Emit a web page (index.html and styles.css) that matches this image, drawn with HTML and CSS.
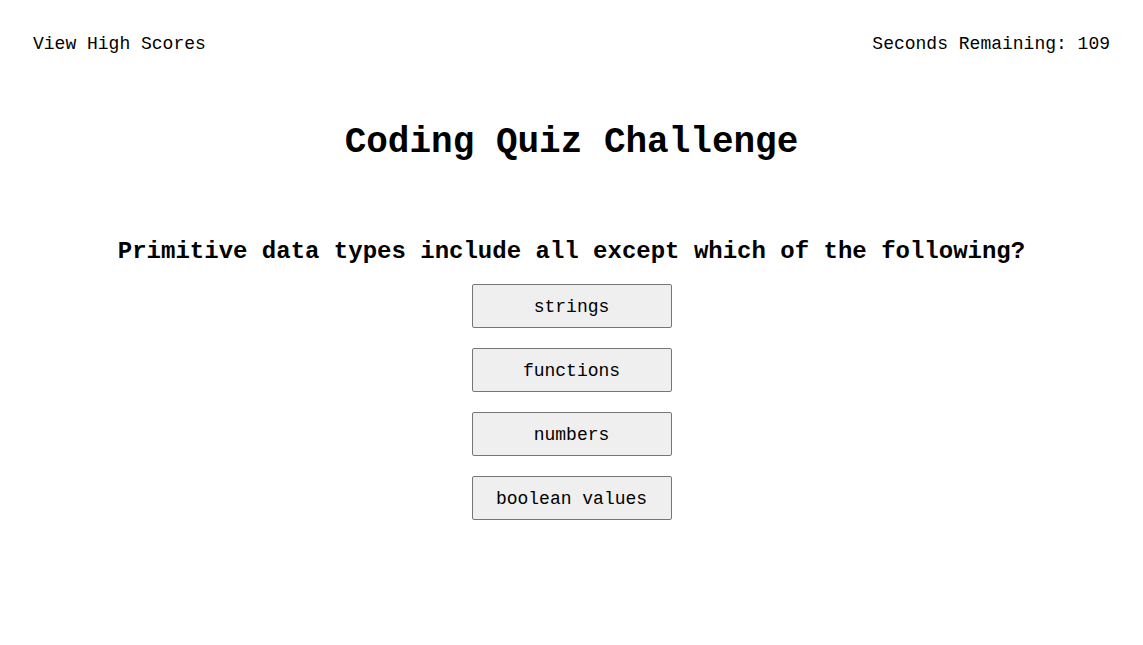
FILE: index.html
```html
<!DOCTYPE html>
<html>
<head>
<meta charset="utf-8">
<title>Coding Quiz Challenge</title>
<link rel="stylesheet" href="styles.css">
</head>
<body>
<header class="top-bar">
  <a class="high-scores">View High Scores</a>
  <span class="timer">Seconds Remaining: 109</span>
</header>
<main class="quiz">
  <h1 class="title">Coding Quiz Challenge</h1>
  <h2 class="question">Primitive data types include all except which of the following?</h2>
  <div class="answers">
    <button class="answer">strings</button>
    <button class="answer">functions</button>
    <button class="answer">numbers</button>
    <button class="answer">boolean values</button>
  </div>
</main>
</body>
</html>
```
FILE: styles.css
```css
body {
  margin: 0;
  background: #fff;
  color: #000;
  font-family: "Liberation Mono", "Courier New", monospace;
}
.top-bar {
  display: flex;
  justify-content: space-between;
  padding: 33px 33px 0 33px;
  font-size: 18px;
  line-height: 22px;
}
.quiz {
  display: flex;
  flex-direction: column;
  align-items: center;
}
.title {
  margin: 66px 0 0 0;
  font-size: 36px;
  line-height: 44px;
  font-weight: bold;
}
.question {
  margin: 72px 0 0 0;
  font-size: 24px;
  line-height: 30px;
  font-weight: bold;
}
.answers {
  margin-top: 17px;
  display: flex;
  flex-direction: column;
  gap: 20px;
}
.answer {
  width: 200px;
  height: 44px;
  font-family: "Liberation Mono", "Courier New", monospace;
  font-size: 18px;
  color: #000;
  background: #efefef;
  border: 1px solid #767676;
  border-radius: 2px;
  padding: 2px 0 0 0;
}
```
